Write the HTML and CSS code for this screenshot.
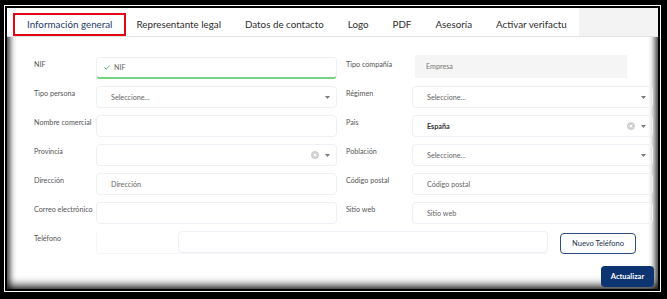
FILE: index.html
```html
<!DOCTYPE html>
<html lang="es">
<head>
    <meta charset="UTF-8">
    <meta name="viewport" content="width=device-width, initial-scale=1.0">
    <title>Información general</title>
    <link rel="stylesheet" href="styles.css">
</head>
<body>
    <div class="frame">
        <div class="panel">
            <nav class="tabs">
                <ul class="tab-list">
                    <li class="tab active">Información general</li>
                    <li class="tab">Representante legal</li>
                    <li class="tab">Datos de contacto</li>
                    <li class="tab">Logo</li>
                    <li class="tab">PDF</li>
                    <li class="tab">Asesoría</li>
                    <li class="tab">Activar verifactu</li>
                </ul>
            </nav>

            <form class="form">
                <div class="form-grid">
                    <div class="field">
                        <label>NIF</label>
                        <div class="control valid">
                            <svg class="check" width="6" height="5" viewBox="0 0 6 5"><path d="M0.5 2.6L2.2 4.1L5.5 0.8" fill="none" stroke="#3fb65c" stroke-width="1"/></svg>
                            <span>NIF</span>
                        </div>
                    </div>
                    <div class="field">
                        <label>Tipo compañía</label>
                        <div class="control disabled">Empresa</div>
                    </div>

                    <div class="field">
                        <label>Tipo persona</label>
                        <div class="control select">
                            <span>Seleccione...</span>
                            <svg class="caret" width="5" height="3" viewBox="0 0 5 3"><path d="M0 0H5L2.5 3Z" fill="#7a7a7a"/></svg>
                        </div>
                    </div>
                    <div class="field">
                        <label>Régimen</label>
                        <div class="control select">
                            <span>Seleccione...</span>
                            <svg class="caret" width="5" height="3" viewBox="0 0 5 3"><path d="M0 0H5L2.5 3Z" fill="#7a7a7a"/></svg>
                        </div>
                    </div>

                    <div class="field">
                        <label>Nombre comercial</label>
                        <div class="control"></div>
                    </div>
                    <div class="field">
                        <label>Pais</label>
                        <div class="control select">
                            <span class="value">España</span>
                            <svg class="clear" width="8" height="8" viewBox="0 0 8 8"><circle cx="4" cy="4" r="3.6" fill="#d4d4d4" stroke="#bdbdbd" stroke-width="0.6"/><path d="M2.7 2.7L5.3 5.3M5.3 2.7L2.7 5.3" stroke="#fff" stroke-width="0.9"/></svg>
                            <svg class="caret" width="5" height="3" viewBox="0 0 5 3"><path d="M0 0H5L2.5 3Z" fill="#7a7a7a"/></svg>
                        </div>
                    </div>

                    <div class="field">
                        <label>Provincia</label>
                        <div class="control select">
                            <span></span>
                            <svg class="clear" width="8" height="8" viewBox="0 0 8 8"><circle cx="4" cy="4" r="3.6" fill="#d4d4d4" stroke="#bdbdbd" stroke-width="0.6"/><path d="M2.7 2.7L5.3 5.3M5.3 2.7L2.7 5.3" stroke="#fff" stroke-width="0.9"/></svg>
                            <svg class="caret" width="5" height="3" viewBox="0 0 5 3"><path d="M0 0H5L2.5 3Z" fill="#7a7a7a"/></svg>
                        </div>
                    </div>
                    <div class="field">
                        <label>Población</label>
                        <div class="control select">
                            <span>Seleccione...</span>
                            <svg class="caret" width="5" height="3" viewBox="0 0 5 3"><path d="M0 0H5L2.5 3Z" fill="#7a7a7a"/></svg>
                        </div>
                    </div>

                    <div class="field">
                        <label>Dirección</label>
                        <div class="control">Dirección</div>
                    </div>
                    <div class="field">
                        <label>Código postal</label>
                        <div class="control">Código postal</div>
                    </div>

                    <div class="field">
                        <label>Correo electrónico</label>
                        <div class="control"></div>
                    </div>
                    <div class="field">
                        <label>Sitio web</label>
                        <div class="control">Sitio web</div>
                    </div>
                </div>

                <div class="phone-row">
                    <label>Teléfono</label>
                    <div class="phone-box">
                        <div class="control phone-input"></div>
                    </div>
                    <button type="button" class="btn-outline">Nuevo Teléfono</button>
                </div>

                <div class="actions">
                    <button type="button" class="btn-primary">Actualizar</button>
                </div>
            </form>
        </div>
    </div>
</body>
</html>
```

FILE: styles.css
```css
body {
    margin: 0;
    background-color: #000000;
    font-family: Lato, "Open Sans", sans-serif;
    color: #333333;
}
.frame {
    margin: 5px 6px 7px 4px;
    border: 1px solid #ffffff;
    padding: 2px;
    height: 281px;
}
.panel {
    height: 100%;
    background-color: #ffffff;
    overflow: hidden;
    box-shadow: inset 6px 0 6px -3px rgba(0, 0, 0, 0.75),
                inset -6px 0 6px -3px rgba(0, 0, 0, 0.75),
                inset 0 -8px 8px -4px rgba(0, 0, 0, 0.75);
}

/* pestañas */
.tabs {
    height: 28px;
    display: flex;
    background-color: #f3f3f3;
    border-bottom: 1px solid #e4e4e4;
}
.tab-list {
    display: flex;
    margin: 0;
    padding: 0 0 0 8px;
    list-style: none;
    background-color: #ffffff;
}
.tab {
    height: 19px;
    line-height: 19px;
    margin-top: 7px;
    padding: 0 12px;
    font-size: 9.8px;
    color: #2e2e2e;
    white-space: nowrap;
}
.tab.active {
    color: #23406b;
    outline: 2px solid #e30613;
}

/* formulario */
.form {
    padding: 20px 4px 0 27px;
}
.form-grid {
    display: grid;
    grid-template-columns: 303px 307px;
    column-gap: 9px;
    row-gap: 7px;
}
.field {
    display: grid;
    grid-template-columns: 1fr 241px;
}
label {
    font-size: 7.2px;
    color: #555555;
    padding-top: 3px;
    white-space: nowrap;
}
.control {
    height: 22px;
    box-sizing: border-box;
    border: 1px solid #edf0f4;
    border-radius: 4px;
    display: flex;
    align-items: center;
    gap: 4px;
    padding: 0 6px 0 14px;
    font-size: 7.2px;
    color: #666666;
}
.control.valid {
    padding-left: 6px;
    border-bottom: 2px solid #79d27f;
}
.control.valid .check {
    margin-left: 1px;
}
.control.disabled {
    border: none;
    border-radius: 0;
    background-color: #f5f5f5;
    width: 212px;
    margin: -2px 0 0 3px;
    height: 23px;
    padding-left: 11px;
    color: #777777;
}
.control.select span {
    flex: 1;
}
.control .value {
    color: #333333;
    font-weight: 700;
}
.control .clear {
    margin-right: 2px;
}

.phone-row {
    display: flex;
    align-items: flex-start;
    margin-top: 7px;
}
.phone-row label {
    width: 62px;
}
.phone-box {
    width: 452px;
    height: 23px;
    box-sizing: border-box;
    border: 1px solid #f4f6f9;
    border-top: none;
    border-right: none;
    border-radius: 4px;
    padding-left: 81px;
}
.phone-input {
    width: 100%;
}
.btn-outline {
    margin: 2px 0 0 12px;
    width: 76px;
    height: 21px;
    padding: 0;
    border: 1px solid #2d4d80;
    border-radius: 4px;
    background-color: #ffffff;
    font-family: inherit;
    font-size: 7.5px;
    color: #1d2f52;
}
.actions {
    display: flex;
    justify-content: flex-end;
    margin-top: 12px;
}
.btn-primary {
    width: 53px;
    height: 21px;
    padding: 0;
    border: none;
    border-radius: 4px;
    background-color: #0c3470;
    font-family: inherit;
    font-size: 7.5px;
    font-weight: 700;
    color: #ffffff;
}
```
